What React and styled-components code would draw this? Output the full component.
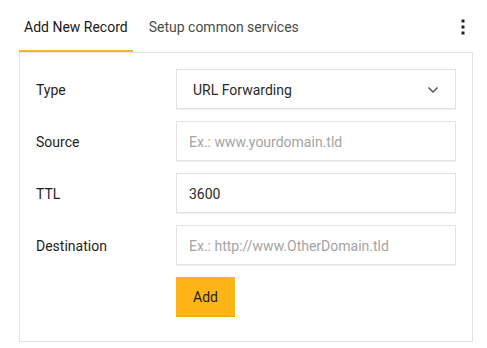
import React from "react";
import styled, { createGlobalStyle } from "styled-components";

const Global = createGlobalStyle`
  html, body { margin: 0; padding: 0; background: #fff; }
  body { font-family: Roboto, "Liberation Sans", Arial, sans-serif; }
  * { box-sizing: border-box; }
`;

const Page = styled.div`
  width: 487px;
  padding: 0 14px 0 19px;
`;

const TabBar = styled.div`
  display: flex;
  align-items: stretch;
  height: 52px;
`;

const Tab = styled.div`
  display: flex;
  align-items: center;
  padding: 4px 5px 0 5px;
  margin-right: ${(p) => (p.$active ? "11px" : "0")};
  font-size: 14px;
  color: ${(p) => (p.$active ? "#1a1a1a" : "#4a4a4a")};
  border-bottom: 2px solid ${(p) => (p.$active ? "#f5b335" : "transparent")};
  white-space: nowrap;
`;

const Spacer = styled.div`
  flex: 1;
`;

const Kebab = styled.div`
  display: flex;
  align-items: center;
  padding-right: 8px;
  padding-top: 1px;
`;

const Panel = styled.div`
  border: 1px solid #e4e4e4;
  box-shadow: 0 1px 1px rgba(0, 0, 0, 0.04);
  padding: 16px 16px 24px 16px;
  display: flex;
  flex-direction: column;
  gap: 12px;
`;

const Row = styled.div`
  display: grid;
  grid-template-columns: 140px 1fr;
  align-items: center;
`;

const Label = styled.div`
  font-size: 14px;
  color: #1e1e1e;
  padding-top: 1px;
`;

const Field = styled.div`
  height: 40px;
  border: 1px solid #e2e2e2;
  box-shadow: 0 1px 1px rgba(0, 0, 0, 0.05);
  display: flex;
  align-items: center;
  padding: 1px ${(p) => (p.$select ? "16px" : "12px")} 0;
  font-size: 14px;
  color: ${(p) => (p.$placeholder ? "#a4a4a4" : "#2a2a2a")};
  background: #fff;
`;

const FieldText = styled.span`
  flex: 1;
`;

const Button = styled.button`
  width: 59px;
  height: 40px;
  background: #fdb515;
  border: none;
  border-bottom: 1px solid #eaa40e;
  font-family: inherit;
  font-size: 14px;
  color: #1e1e1e;
  padding: 1px 0 0;
  cursor: pointer;
`;

const Chevron = () => (
  <svg width="12" height="8" viewBox="0 0 12 8">
    <path d="M1.5 1.5 L6 6 L10.5 1.5" fill="none" stroke="#555" strokeWidth="1.5" />
  </svg>
);

const Dots = () => (
  <svg width="4" height="16" viewBox="0 0 4 16">
    <rect x="0.5" y="0.5" width="3" height="3" fill="#222" />
    <rect x="0.5" y="6.5" width="3" height="3" fill="#222" />
    <rect x="0.5" y="12.5" width="3" height="3" fill="#222" />
  </svg>
);

export default function App() {
  return (
    <Page>
      <Global />
      <TabBar>
        <Tab $active>Add New Record</Tab>
        <Tab>Setup common services</Tab>
        <Spacer />
        <Kebab>
          <Dots />
        </Kebab>
      </TabBar>
      <Panel>
        <Row>
          <Label>Type</Label>
          <Field $select>
            <FieldText>URL Forwarding</FieldText>
            <Chevron />
          </Field>
        </Row>
        <Row>
          <Label>Source</Label>
          <Field $placeholder>Ex.: www.yourdomain.tld</Field>
        </Row>
        <Row>
          <Label>TTL</Label>
          <Field>3600</Field>
        </Row>
        <Row>
          <Label>Destination</Label>
          <Field $placeholder>Ex.: http://www.OtherDomain.tld</Field>
        </Row>
        <Row>
          <span />
          <div>
            <Button>Add</Button>
          </div>
        </Row>
      </Panel>
    </Page>
  );
}
